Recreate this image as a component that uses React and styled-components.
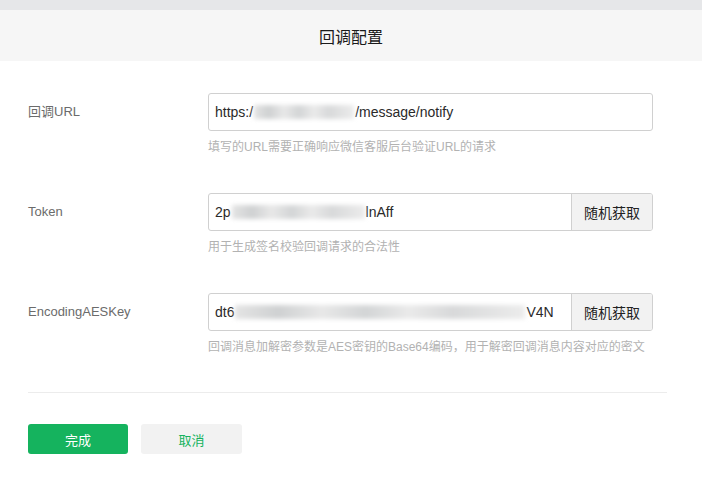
import React from 'react'
import styled, { createGlobalStyle } from 'styled-components';

const GlobalStyle = createGlobalStyle`
  html, body {
    margin: 0;
    padding: 0;
    background: #fff;
    font-family: "Liberation Sans", Arial, "Noto Sans CJK SC", sans-serif;
  }
`;

const Page = styled.div`
  width: 702px;
  height: 479px;
  overflow: hidden;
  background: #fff;
`;

const TopStrip = styled.div`
  height: 10px;
  background: #e6e7e9;
`;

const Header = styled.div`
  height: 51px;
  background: #f6f6f6;
  display: flex;
  align-items: center;
  justify-content: center;
  font-size: 16px;
  color: #1a1a1a;
`;

const Body = styled.div`
  padding: 32px 35px 0 28px;
`;

const Row = styled.div`
  display: flex;
  align-items: flex-start;
  height: 100px;
`;

const Label = styled.div`
  width: 180px;
  flex-shrink: 0;
  height: 38px;
  line-height: 38px;
  font-size: 13px;
  color: #6b6b6b;
`;

const Field = styled.div`
  width: 445px;
`;

const InputGroup = styled.div`
  display: flex;
  height: 38px;
  border: 1px solid #d0d0d0;
  border-radius: 3px;
  box-sizing: border-box;
  overflow: hidden;
`;

const Value = styled.div`
  flex: 1;
  display: flex;
  align-items: center;
  padding: 0 6px;
  font-size: 14px;
  color: #2a2a2a;
  white-space: nowrap;
`;

const Blur = styled.span`
  display: inline-block;
  width: ${p => p.w}px;
  height: 14px;
  margin: 0 1px;
  background: linear-gradient(90deg, #e4e4e4 0%, #cfd1d2 15%, #e8e8e8 30%, #d3d5d6 45%, #eaeaea 60%, #d8d9da 75%, #ececec 100%);
  filter: blur(2px);
`;

const AddonButton = styled.div`
  width: 80px;
  flex-shrink: 0;
  display: flex;
  align-items: center;
  justify-content: center;
  background: #f2f2f2;
  border-left: 1px solid #d0d0d0;
  font-size: 14px;
  color: #222;
`;

const Hint = styled.div`
  margin-top: 6px;
  font-size: 12px;
  color: #b2b2b2;
  white-space: nowrap;
`;

const Divider = styled.div`
  height: 1px;
  background: #ececec;
  margin-top: -1px;
`;

const Actions = styled.div`
  display: flex;
  gap: 13px;
  margin-top: 31px;
`;

const Button = styled.div`
  width: ${p => (p.primary ? 100 : 101)}px;
  height: 30px;
  border-radius: 3px;
  display: flex;
  align-items: center;
  justify-content: center;
  font-size: 13px;
  background: ${p => (p.primary ? '#15b35e' : '#f2f2f2')};
  color: ${p => (p.primary ? '#fff' : '#15b35e')};
`;

const fields = [
  {
    label: '回调URL',
    before: 'https:/',
    blur: 100,
    after: '/message/notify',
    hint: '填写的URL需要正确响应微信客服后台验证URL的请求',
  },
  {
    label: 'Token',
    before: '2p',
    blur: 133,
    after: 'lnAff',
    hint: '用于生成签名校验回调请求的合法性',
    random: true,
  },
  {
    label: 'EncodingAESKey',
    before: 'dt6',
    blur: 290,
    after: 'V4N',
    hint: '回调消息加解密参数是AES密钥的Base64编码，用于解密回调消息内容对应的密文',
    random: true,
  },
];

const App = () => {
  return (
    <Page>
      <GlobalStyle />
      <TopStrip />
      <Header>回调配置</Header>
      <Body>
        {fields.map(item => (
          <Row key={item.label}>
            <Label>{item.label}</Label>
            <Field>
              <InputGroup>
                <Value>
                  {item.before}
                  <Blur w={item.blur} />
                  {item.after}
                </Value>
                {item.random && <AddonButton>随机获取</AddonButton>}
              </InputGroup>
              <Hint>{item.hint}</Hint>
            </Field>
          </Row>
        ))}
        <Divider />
        <Actions>
          <Button primary>完成</Button>
          <Button>取消</Button>
        </Actions>
      </Body>
    </Page>
  )
}

export default App;
